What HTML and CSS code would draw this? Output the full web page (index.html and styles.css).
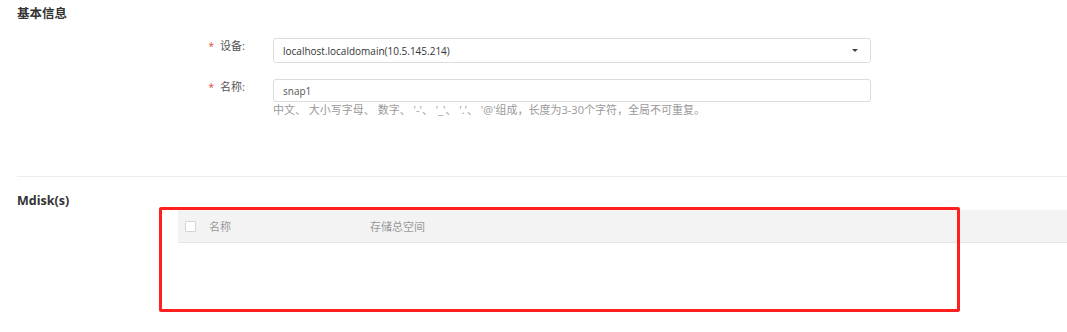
FILE: index.html
```html
<!DOCTYPE html>
<html lang="zh-CN">
<head>
    <meta charset="UTF-8">
    <title>创建快照</title>
    <link rel="stylesheet" href="styles.css">
</head>
<body>
    <div class="page">
        <div class="section-title">基本信息</div>

        <div class="form">
            <div class="form-row">
                <label class="form-label"><span class="required">*</span>设备:</label>
                <div class="form-field">
                    <div class="select">
                        <span>localhost.localdomain(10.5.145.214)</span>
                        <span class="caret"></span>
                    </div>
                </div>
            </div>
            <div class="form-row">
                <label class="form-label"><span class="required">*</span>名称:</label>
                <div class="form-field">
                    <div class="input">snap1</div>
                    <div class="hint">中文、 大小写字母、 数字、 '-'、 '_'、 '.'、 '@'组成，长度为3-30个字符，全局不可重复。</div>
                </div>
            </div>
        </div>

        <div class="divider"></div>

        <div class="mdisk">
            <div class="section-title">Mdisk(s)</div>
            <div class="table">
                <div class="table-head">
                    <div class="col-check"><span class="checkbox"></span></div>
                    <div class="col-name">名称</div>
                    <div class="col-size">存储总空间</div>
                </div>
                <div class="table-body"></div>
            </div>
            <div class="mark"></div>
        </div>
    </div>
</body>
</html>
```

FILE: styles.css
```css
body {
    margin: 0;
    background-color: #fff;
    font-family: "Open Sans", "Noto Sans CJK SC", sans-serif;
    color: #333;
}

.page {
    padding-left: 17px;
    overflow: hidden;
    height: 332px;
}

.section-title {
    font-size: 12.5px;
    font-weight: bold;
    line-height: 18px;
    color: #333;
}

.page > .section-title {
    margin-top: 5px;
}

.form {
    margin-top: 15px;
}

.form-row {
    display: flex;
    align-items: flex-start;
    margin-bottom: 16px;
}

.form-label {
    width: 228px;
    text-align: right;
    font-size: 11px;
    line-height: 14px;
    padding-top: 1px;
    color: #555;
}

.required {
    color: #e5493a;
    font-size: 10px;
    margin-right: 6px;
    vertical-align: top;
}

.form-field {
    margin-left: 28px;
    width: 598px;
}

.select,
.input {
    box-sizing: border-box;
    border: 1px solid #dcdcdc;
    border-radius: 3px;
    padding: 0 10px 0 9px;
    font-size: 10px;
    display: flex;
    align-items: center;
}

.select {
    height: 25px;
    justify-content: space-between;
    color: #333;
}

.input {
    height: 23px;
    color: #555;
}

.caret {
    width: 0;
    height: 0;
    border-left: 3px solid transparent;
    border-right: 3px solid transparent;
    border-top: 3px solid #444;
    margin-right: 2px;
}

.hint {
    font-size: 11px;
    line-height: 14px;
    margin-top: 1px;
    color: #999;
}

.divider {
    margin-top: 59px;
    height: 1px;
    background-color: #ececec;
}

.mdisk {
    position: relative;
    padding-top: 15px;
}

.table {
    margin-left: 161px;
}

.table-head {
    display: flex;
    align-items: center;
    height: 32px;
    background-color: #f3f3f3;
    border-bottom: 1px solid #e6e6e6;
    font-size: 11px;
    color: #999;
}

.col-check {
    width: 31px;
    padding-left: 7px;
    box-sizing: border-box;
}

.checkbox {
    display: block;
    width: 9px;
    height: 9px;
    border: 1px solid #d4d4d4;
    border-radius: 1px;
    background-color: #fff;
}

.col-name {
    width: 161px;
}

.table-body {
    height: 68px;
}

/* annotation box drawn over the table */
.mark {
    position: absolute;
    left: 142px;
    top: 30px;
    width: 795px;
    height: 99px;
    border: 3px solid #ff1f1f;
    border-radius: 2px;
}
```
